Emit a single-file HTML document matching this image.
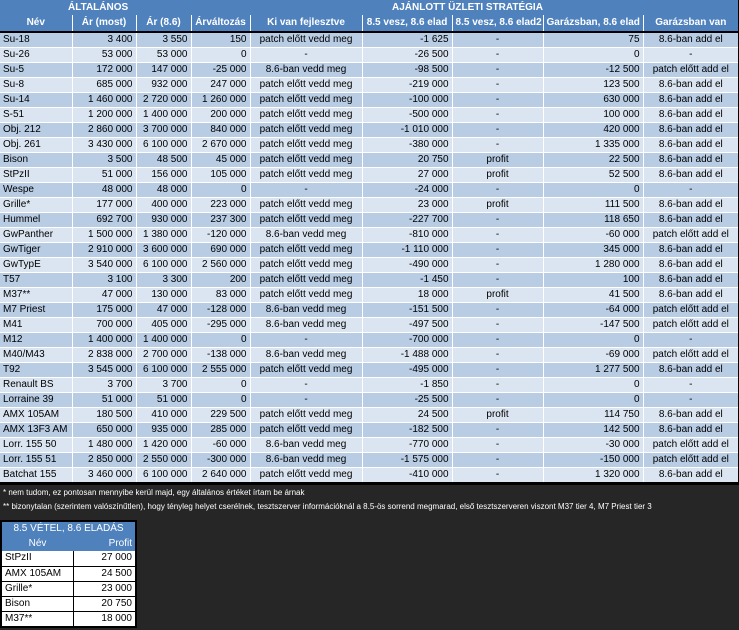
<!DOCTYPE html>
<html><head><meta charset="utf-8"><style>
*{margin:0;padding:0;box-sizing:border-box}
body{width:739px;height:630px;background:#262626;font-family:"Liberation Sans",sans-serif;font-size:10px;color:#000;position:relative;overflow:hidden}
#main{position:absolute;left:0;top:0;width:739px;border-collapse:collapse;table-layout:fixed;border-right:2px solid #000;border-bottom:3px solid #000}
#main td{height:15px;line-height:14px;white-space:nowrap;overflow:hidden;border-right:1px solid #fff;border-bottom:1px solid #fff;padding:0 3px}
#main tr.h td{background:#4f81bd;color:#fff;font-weight:bold;text-align:center;height:15px;border-bottom:none}
#main tr.h2 td{border-bottom:2px solid #000;height:17px}
#main tr.h1 td{border-right:none}
tr.d td{background:#b8cce4}
tr.l td{background:#dbe5f1}
.r{text-align:right}.c{text-align:center}
.fn{position:absolute;left:3px;color:#fff;font-size:8px}
#small{position:absolute;left:0;top:520px;width:137px;border-collapse:collapse;table-layout:fixed;border:2px solid #000;background:#000}
#small td{height:15px;line-height:14px;padding:0 3px;border-right:1px solid #000;border-bottom:1px solid #000;background:#fff;white-space:nowrap}
#small tr.h td{background:#4f81bd;color:#fff;text-align:center;border:none}
</style></head><body>
<table id="main">
<colgroup><col style="width:72px"><col style="width:64px"><col style="width:55px"><col style="width:59px"><col style="width:112px"><col style="width:90px"><col style="width:91px"><col style="width:100px"><col style="width:96px"></colgroup>
<tr class="h h1"><td colspan="5" style="text-align:left;padding-left:68px">ÁLTALÁNOS</td><td colspan="4" style="text-align:left;padding-left:30px">AJÁNLOTT ÜZLETI STRATÉGIA</td></tr>
<tr class="h h2"><td>Név</td><td>Ár (most)</td><td>Ár (8.6)</td><td>Árváltozás</td><td>Ki van fejlesztve</td><td>8.5 vesz, 8.6 elad</td><td>8.5 vesz, 8.6 elad2</td><td>Garázsban, 8.6 elad</td><td>Garázsban van</td></tr>
<tr class="d"><td>Su-18</td><td class="r">3 400</td><td class="r">3 550</td><td class="r">150</td><td class="c">patch előtt vedd meg</td><td class="r">-1 625</td><td class="c">-</td><td class="r">75</td><td class="c">8.6-ban add el</td></tr>
<tr class="l"><td>Su-26</td><td class="r">53 000</td><td class="r">53 000</td><td class="r">0</td><td class="c">-</td><td class="r">-26 500</td><td class="c">-</td><td class="r">0</td><td class="c">-</td></tr>
<tr class="d"><td>Su-5</td><td class="r">172 000</td><td class="r">147 000</td><td class="r">-25 000</td><td class="c">8.6-ban vedd meg</td><td class="r">-98 500</td><td class="c">-</td><td class="r">-12 500</td><td class="c">patch előtt add el</td></tr>
<tr class="l"><td>Su-8</td><td class="r">685 000</td><td class="r">932 000</td><td class="r">247 000</td><td class="c">patch előtt vedd meg</td><td class="r">-219 000</td><td class="c">-</td><td class="r">123 500</td><td class="c">8.6-ban add el</td></tr>
<tr class="d"><td>Su-14</td><td class="r">1 460 000</td><td class="r">2 720 000</td><td class="r">1 260 000</td><td class="c">patch előtt vedd meg</td><td class="r">-100 000</td><td class="c">-</td><td class="r">630 000</td><td class="c">8.6-ban add el</td></tr>
<tr class="l"><td>S-51</td><td class="r">1 200 000</td><td class="r">1 400 000</td><td class="r">200 000</td><td class="c">patch előtt vedd meg</td><td class="r">-500 000</td><td class="c">-</td><td class="r">100 000</td><td class="c">8.6-ban add el</td></tr>
<tr class="d"><td>Obj. 212</td><td class="r">2 860 000</td><td class="r">3 700 000</td><td class="r">840 000</td><td class="c">patch előtt vedd meg</td><td class="r">-1 010 000</td><td class="c">-</td><td class="r">420 000</td><td class="c">8.6-ban add el</td></tr>
<tr class="l"><td>Obj. 261</td><td class="r">3 430 000</td><td class="r">6 100 000</td><td class="r">2 670 000</td><td class="c">patch előtt vedd meg</td><td class="r">-380 000</td><td class="c">-</td><td class="r">1 335 000</td><td class="c">8.6-ban add el</td></tr>
<tr class="d"><td>Bison</td><td class="r">3 500</td><td class="r">48 500</td><td class="r">45 000</td><td class="c">patch előtt vedd meg</td><td class="r">20 750</td><td class="c">profit</td><td class="r">22 500</td><td class="c">8.6-ban add el</td></tr>
<tr class="l"><td>StPzII</td><td class="r">51 000</td><td class="r">156 000</td><td class="r">105 000</td><td class="c">patch előtt vedd meg</td><td class="r">27 000</td><td class="c">profit</td><td class="r">52 500</td><td class="c">8.6-ban add el</td></tr>
<tr class="d"><td>Wespe</td><td class="r">48 000</td><td class="r">48 000</td><td class="r">0</td><td class="c">-</td><td class="r">-24 000</td><td class="c">-</td><td class="r">0</td><td class="c">-</td></tr>
<tr class="l"><td>Grille*</td><td class="r">177 000</td><td class="r">400 000</td><td class="r">223 000</td><td class="c">patch előtt vedd meg</td><td class="r">23 000</td><td class="c">profit</td><td class="r">111 500</td><td class="c">8.6-ban add el</td></tr>
<tr class="d"><td>Hummel</td><td class="r">692 700</td><td class="r">930 000</td><td class="r">237 300</td><td class="c">patch előtt vedd meg</td><td class="r">-227 700</td><td class="c">-</td><td class="r">118 650</td><td class="c">8.6-ban add el</td></tr>
<tr class="l"><td>GwPanther</td><td class="r">1 500 000</td><td class="r">1 380 000</td><td class="r">-120 000</td><td class="c">8.6-ban vedd meg</td><td class="r">-810 000</td><td class="c">-</td><td class="r">-60 000</td><td class="c">patch előtt add el</td></tr>
<tr class="d"><td>GwTiger</td><td class="r">2 910 000</td><td class="r">3 600 000</td><td class="r">690 000</td><td class="c">patch előtt vedd meg</td><td class="r">-1 110 000</td><td class="c">-</td><td class="r">345 000</td><td class="c">8.6-ban add el</td></tr>
<tr class="l"><td>GwTypE</td><td class="r">3 540 000</td><td class="r">6 100 000</td><td class="r">2 560 000</td><td class="c">patch előtt vedd meg</td><td class="r">-490 000</td><td class="c">-</td><td class="r">1 280 000</td><td class="c">8.6-ban add el</td></tr>
<tr class="d"><td>T57</td><td class="r">3 100</td><td class="r">3 300</td><td class="r">200</td><td class="c">patch előtt vedd meg</td><td class="r">-1 450</td><td class="c">-</td><td class="r">100</td><td class="c">8.6-ban add el</td></tr>
<tr class="l"><td>M37**</td><td class="r">47 000</td><td class="r">130 000</td><td class="r">83 000</td><td class="c">patch előtt vedd meg</td><td class="r">18 000</td><td class="c">profit</td><td class="r">41 500</td><td class="c">8.6-ban add el</td></tr>
<tr class="d"><td>M7 Priest</td><td class="r">175 000</td><td class="r">47 000</td><td class="r">-128 000</td><td class="c">8.6-ban vedd meg</td><td class="r">-151 500</td><td class="c">-</td><td class="r">-64 000</td><td class="c">patch előtt add el</td></tr>
<tr class="l"><td>M41</td><td class="r">700 000</td><td class="r">405 000</td><td class="r">-295 000</td><td class="c">8.6-ban vedd meg</td><td class="r">-497 500</td><td class="c">-</td><td class="r">-147 500</td><td class="c">patch előtt add el</td></tr>
<tr class="d"><td>M12</td><td class="r">1 400 000</td><td class="r">1 400 000</td><td class="r">0</td><td class="c">-</td><td class="r">-700 000</td><td class="c">-</td><td class="r">0</td><td class="c">-</td></tr>
<tr class="l"><td>M40/M43</td><td class="r">2 838 000</td><td class="r">2 700 000</td><td class="r">-138 000</td><td class="c">8.6-ban vedd meg</td><td class="r">-1 488 000</td><td class="c">-</td><td class="r">-69 000</td><td class="c">patch előtt add el</td></tr>
<tr class="d"><td>T92</td><td class="r">3 545 000</td><td class="r">6 100 000</td><td class="r">2 555 000</td><td class="c">patch előtt vedd meg</td><td class="r">-495 000</td><td class="c">-</td><td class="r">1 277 500</td><td class="c">8.6-ban add el</td></tr>
<tr class="l"><td>Renault BS</td><td class="r">3 700</td><td class="r">3 700</td><td class="r">0</td><td class="c">-</td><td class="r">-1 850</td><td class="c">-</td><td class="r">0</td><td class="c">-</td></tr>
<tr class="d"><td>Lorraine 39</td><td class="r">51 000</td><td class="r">51 000</td><td class="r">0</td><td class="c">-</td><td class="r">-25 500</td><td class="c">-</td><td class="r">0</td><td class="c">-</td></tr>
<tr class="l"><td>AMX 105AM</td><td class="r">180 500</td><td class="r">410 000</td><td class="r">229 500</td><td class="c">patch előtt vedd meg</td><td class="r">24 500</td><td class="c">profit</td><td class="r">114 750</td><td class="c">8.6-ban add el</td></tr>
<tr class="d"><td>AMX 13F3 AM</td><td class="r">650 000</td><td class="r">935 000</td><td class="r">285 000</td><td class="c">patch előtt vedd meg</td><td class="r">-182 500</td><td class="c">-</td><td class="r">142 500</td><td class="c">8.6-ban add el</td></tr>
<tr class="l"><td>Lorr. 155 50</td><td class="r">1 480 000</td><td class="r">1 420 000</td><td class="r">-60 000</td><td class="c">8.6-ban vedd meg</td><td class="r">-770 000</td><td class="c">-</td><td class="r">-30 000</td><td class="c">patch előtt add el</td></tr>
<tr class="d"><td>Lorr. 155 51</td><td class="r">2 850 000</td><td class="r">2 550 000</td><td class="r">-300 000</td><td class="c">8.6-ban vedd meg</td><td class="r">-1 575 000</td><td class="c">-</td><td class="r">-150 000</td><td class="c">patch előtt add el</td></tr>
<tr class="l"><td>Batchat 155</td><td class="r">3 460 000</td><td class="r">6 100 000</td><td class="r">2 640 000</td><td class="c">patch előtt vedd meg</td><td class="r">-410 000</td><td class="c">-</td><td class="r">1 320 000</td><td class="c">8.6-ban add el</td></tr>
</table>
<div class="fn" style="top:488px">* nem tudom, ez pontosan mennyibe kerül majd, egy általános értéket írtam be árnak</div>
<div class="fn" style="top:502px">** bizonytalan (szerintem valószínűtlen), hogy tényleg helyet cserélnek, tesztszerver információknál a 8.5-ös sorrend megmarad, első tesztszerveren viszont M37 tier 4, M7 Priest tier 3</div>
<table id="small">
<colgroup><col style="width:72px"><col style="width:63px"></colgroup>
<tr class="h"><td colspan="2">8.5 VÉTEL, 8.6 ELADÁS</td></tr>
<tr class="h"><td>Név</td><td class="r" style="text-align:right">Profit</td></tr>
<tr><td>StPzII</td><td class="r">27 000</td></tr>
<tr><td>AMX 105AM</td><td class="r">24 500</td></tr>
<tr><td>Grille*</td><td class="r">23 000</td></tr>
<tr><td>Bison</td><td class="r">20 750</td></tr>
<tr><td>M37**</td><td class="r">18 000</td></tr>
</table>
</body></html>
